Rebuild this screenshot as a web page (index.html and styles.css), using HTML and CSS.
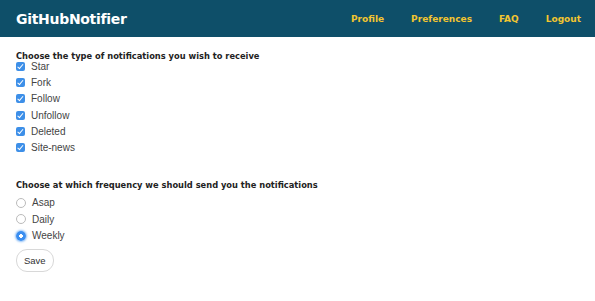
FILE: index.html
```html
<!DOCTYPE html>
<html lang="en">
<head>
    <meta charset="UTF-8">
    <title>GitHubNotifier - Preferences</title>
    <link rel="stylesheet" href="styles.css">
</head>
<body>
    <header class="topbar">
        <a class="brand" href="#">GitHubNotifier</a>
        <nav class="nav">
            <a href="#">Profile</a>
            <a href="#">Preferences</a>
            <a href="#">FAQ</a>
            <a href="#">Logout</a>
        </nav>
    </header>

    <form class="prefs">
        <div class="group group-types">
            <div class="group-title">Choose the type of notifications you wish to receive</div>
            <label class="option"><input type="checkbox" checked> Star</label>
            <label class="option"><input type="checkbox" checked> Fork</label>
            <label class="option"><input type="checkbox" checked> Follow</label>
            <label class="option"><input type="checkbox" checked> Unfollow</label>
            <label class="option"><input type="checkbox" checked> Deleted</label>
            <label class="option"><input type="checkbox" checked> Site-news</label>
        </div>

        <div class="group group-freq">
            <div class="group-title">Choose at which frequency we should send you the notifications</div>
            <label class="option"><input type="radio" name="freq"> Asap</label>
            <label class="option"><input type="radio" name="freq"> Daily</label>
            <label class="option"><input type="radio" name="freq" checked> Weekly</label>
        </div>

        <button type="button" class="btn">Save</button>
    </form>
</body>
</html>
```

FILE: styles.css
```css
body {
    margin: 0;
    font-family: 'Liberation Sans', Arial, sans-serif;
    color: #333;
    background: #fff;
}
.topbar {
    display: flex;
    justify-content: space-between;
    align-items: center;
    height: 37px;
    padding: 0 14px 0 16px;
    background: #0e4f69;
}
.brand {
    font-family: 'DejaVu Sans', sans-serif;
    font-weight: bold;
    font-size: 14px;
    color: #fff;
    text-decoration: none;
    letter-spacing: -0.3px;
}
.nav {
    display: flex;
    gap: 27px;
}
.nav a {
    font-family: 'DejaVu Sans', sans-serif;
    font-weight: bold;
    font-size: 9px;
    color: #f2c530;
    text-decoration: none;
}
.prefs {
    padding: 14px 16px;
}
.group {
    display: flex;
    flex-direction: column;
}
.group-title {
    font-family: 'DejaVu Sans', sans-serif;
    font-weight: bold;
    font-size: 8.3px;
    color: #222;
}
.group-types {
    margin-bottom: 24px;
}
.group-types .group-title {
    margin-bottom: -3px;
}
.group-freq {
    margin-bottom: 5px;
}
.group-freq .group-title {
    margin-bottom: 5px;
}
.option {
    display: flex;
    align-items: center;
    gap: 6px;
    height: 16.3px;
    font-size: 10px;
    color: #444;
}
.option input {
    appearance: none;
    margin: 0;
    width: 9px;
    height: 9px;
    flex: none;
}
.option input[type=checkbox] {
    border-radius: 2px;
    background: #3d8fe8;
    position: relative;
}
.option input[type=checkbox]::after {
    content: '';
    position: absolute;
    left: 2.8px;
    top: 1px;
    width: 2px;
    height: 4.5px;
    border: solid #fff;
    border-width: 0 1.4px 1.4px 0;
    transform: rotate(40deg);
}
.option input[type=radio] {
    width: 10px;
    height: 10px;
    border-radius: 50%;
    border: 1px solid #bbb;
    background: #fff;
    box-sizing: border-box;
}
.option input[type=radio]:checked {
    border: none;
    background: radial-gradient(circle, #fff 0 1.6px, #3a8ef0 2px);
    box-shadow: 0 0 2px 1px rgba(70, 150, 240, 0.6);
}
.btn {
    font-family: 'Liberation Sans', Arial, sans-serif;
    font-size: 9.5px;
    color: #333;
    background: #fff;
    border: 1px solid #d8d8d8;
    border-radius: 11px;
    padding: 5px 7px;
    cursor: pointer;
}
```
